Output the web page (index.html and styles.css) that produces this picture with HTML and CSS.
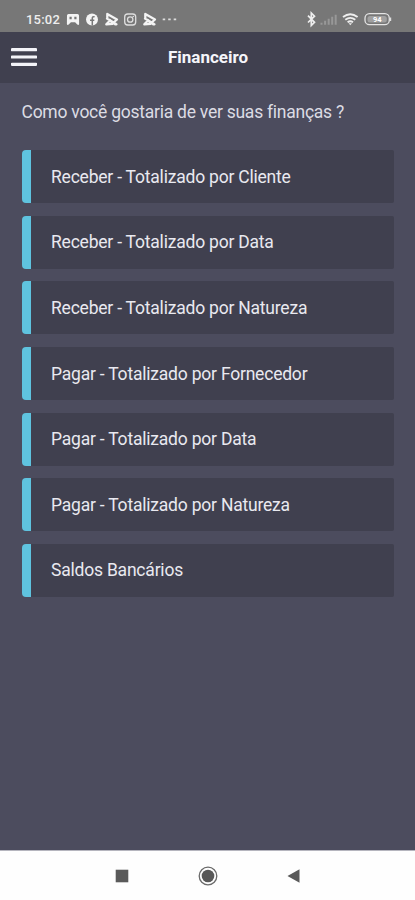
FILE: index.html
```html
<!DOCTYPE html>
<html lang="pt-BR">
<head>
<meta charset="utf-8">
<title>Financeiro</title>
<link rel="stylesheet" href="styles.css">
</head>
<body>
<div class="status">
  <span class="clock">15:02</span>
  <svg class="notifications" width="112" height="16" viewBox="66 11 112 16">
    <path fill="#f4f4f4" fill-rule="evenodd" d="M68.500 14h9q1.500 0 1.500 1.500l.1 8.500q-.3 1.500-1.800.6l-2.200-2.300h-4.200L68.700 24.600q-1.500.900-1.800-.6l.1-8.500q0-1.500 1.500-1.500zM69.500 16.700v2.500h2.200v-2.500zm4.800 0v2.500h2.200v-2.500z"/>
    <circle cx="92" cy="19.500" r="6" fill="#f4f4f4"/>
    <path d="M92.300 25.500v-7.200q0-2 2.300-1.600M90 20.300h4.300" fill="none" stroke="#777" stroke-width="1.500"/>
    <g id="play" fill="none" stroke="#f4f4f4" stroke-width="2.300" stroke-linejoin="round" stroke-linecap="round">
      <path d="M107.300 18.500v-4.500l9.700 5.500-4 3.500M107 18.500l9 5.500M106.300 24.300l4-4 2.500 3.500zM115 24.300h1.500"/>
    </g>
    <rect x="124.700" y="14" width="11" height="11" rx="3" fill="none" stroke="#dedede" stroke-width="1.300"/>
    <circle cx="130.200" cy="19.500" r="2.700" fill="none" stroke="#dedede" stroke-width="1.300"/>
    <circle cx="133.300" cy="16.500" r=".8" fill="#dedede"/>
    <use href="#play" x="38"/>
    <path d="M162.700 19.300h2.500m3 0h2.500m3 0h2.500" stroke="#ddd" stroke-width="1.800"/>
  </svg>
  <svg class="system" width="88" height="18" viewBox="305 10 88 18">
    <path d="M308 15.700l6.500 6.600-3.200 3.200V13l3.200 3.200-6.500 6.300" fill="none" stroke="#eee" stroke-width="1.700"/>
    <path d="M320.500 24.700v-2h2v2zm3.600 0v-4h2v4zm3.600 0v-6h2v6zm3.500 0v-8h2v8zm3.500 0v-10h2v10z" fill="#989898"/>
    <path d="M343 17q7.300-5.500 14.600 0M345.300 19.700q5-3.700 10 0M347.600 22.300q2.700-2 5.400 0" fill="none" stroke="#eee" stroke-width="1.900"/>
    <path d="M348.600 23.200h3.400l-1.700 2.100z" fill="#eee"/>
    <rect x="365" y="13.700" width="24.300" height="11" rx="4.500" fill="none" stroke="#e4e4e4" stroke-width="1.300"/>
    <rect x="367.500" y="16" width="19.300" height="6.500" rx="2.500" fill="#a0a0a0"/>
    <path d="M390.600 17.500v3.500" stroke="#ddd" stroke-width="1.200"/>
    <text class="charge" x="377.200" y="22.200" text-anchor="middle">94</text>
  </svg>
</div>
<header class="header">
  <svg class="menu" width="26" height="20" viewBox="0 0 26 20"><path d="M1.200 2.700h23.600M1.200 10h23.600M1.200 17.300h23.600" stroke="#f3f3f8" stroke-width="3.200" stroke-linecap="round"/></svg>
  <h1 class="title">Financeiro</h1>
</header>
<main class="content">
  <p class="question">Como você gostaria de ver suas finanças ?</p>
  <div class="list">
    <div class="option"><span>Receber - Totalizado por Cliente</span></div>
    <div class="option"><span>Receber - Totalizado por Data</span></div>
    <div class="option"><span>Receber - Totalizado por Natureza</span></div>
    <div class="option"><span>Pagar - Totalizado por Fornecedor</span></div>
    <div class="option"><span>Pagar - Totalizado por Data</span></div>
    <div class="option"><span>Pagar - Totalizado por Natureza</span></div>
    <div class="option"><span>Saldos Bancários</span></div>
  </div>
</main>
<nav class="navbar">
  <svg width="22" height="22" viewBox="0 0 22 22"><path d="M4.700 4.700h12.600v12.600H4.700z" fill="#5a5a5a"/></svg>
  <svg width="22" height="22" viewBox="0 0 22 22"><circle cx="11" cy="11" r="8.800" fill="none" stroke="#6a6a6a" stroke-width="1.300"/><circle cx="11" cy="11" r="6.300" fill="#585858"/></svg>
  <svg width="22" height="22" viewBox="0 0 22 22"><path d="M4.500 11l12-6.700v13.400z" fill="#5a5a5a"/></svg>
</nav>
</body>
</html>
```
FILE: styles.css
```css
* {
  box-sizing: border-box;
}

body {
  margin: 0;
  height: 900px;
  display: flex;
  flex-direction: column;
  overflow: hidden;
  background: #4c4c5e;
  font-family: Roboto, "Liberation Sans", sans-serif;
}

.status {
  height: 32px;
  display: flex;
  align-items: flex-start;
  background: #777;
  padding: 0 22px 0 26px;
}

.clock {
  width: 40px;
  margin-top: 12px;
  font-size: 13px;
  line-height: 15px;
  font-weight: 500;
  letter-spacing: 0.2px;
  color: #eee;
}

.notifications {
  margin-top: 11px;
}

.system {
  margin: 10px 0 0 auto;
}

.charge {
  font-size: 7.5px;
  font-weight: 700;
  fill: #fff;
}

.header {
  height: 51px;
  display: grid;
  grid-template-columns: 26px 1fr 26px;
  align-items: center;
  padding: 0 10px 1px 11px;
  background: #40404f;
}

.menu {
  margin-bottom: 1px;
}

.title {
  margin: 0;
  text-align: center;
  font-size: 17px;
  line-height: 20px;
  font-weight: 700;
  color: #f5f5fa;
}

.content {
  flex: 1;
  padding: 19px 21px 0 21.5px;
}

.question {
  margin: 0 0 27.300px;
  font-size: 17.500px;
  line-height: 21px;
  letter-spacing: -0.25px;
  color: #dcdce4;
}

.list {
  display: flex;
  flex-direction: column;
  gap: 12.600px;
}

.option {
  height: 53px;
  display: flex;
  align-items: center;
  padding-left: 20.500px;
  border-left: 9px solid #5fc3df;
  border-radius: 4px 2px 2px 4px;
  background: #40404f;
  font-size: 17.500px;
  letter-spacing: -0.21px;
  color: #e9e9f0;
}

.navbar {
  height: 50px;
  display: flex;
  justify-content: center;
  align-items: center;
  gap: 64px;
  border-top: 1px solid #b5b5be;
  background: #fefefe;
}
```
